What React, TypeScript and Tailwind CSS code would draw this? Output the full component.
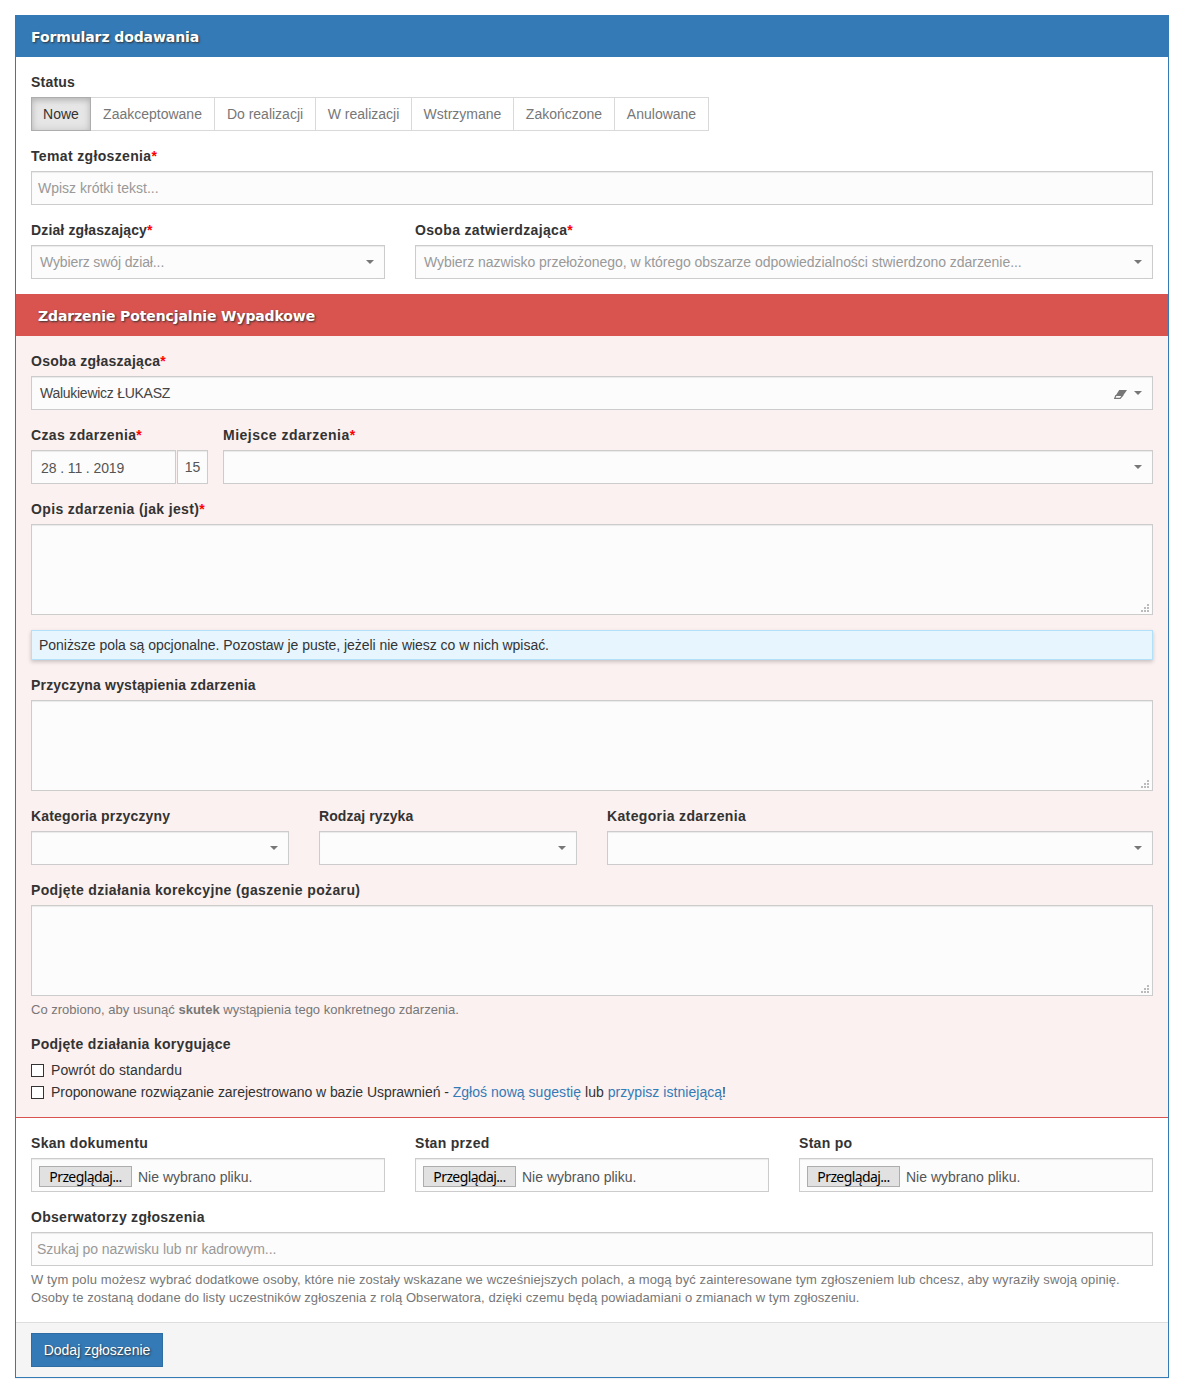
import type { ReactNode } from 'react';

const BOX = 'h-[34px] border border-[#ccc] bg-[#fcfcfc] shadow-[inset_0_1px_1px_rgba(0,0,0,0.075)]';

function Label({ children, required, tracking = 'tracking-[0.3px]' }: { children: ReactNode; required?: boolean; tracking?: string }) {
  return (
    <div className={`${tracking} mb-[5px] h-5 whitespace-nowrap font-bold leading-5`}>
      {children}
      {required && <span className="text-[#f00]">*</span>}
    </div>
  );
}

function Field({ label, required, tracking, className = '', children }: { label: string; required?: boolean; tracking?: string; className?: string; children: ReactNode }) {
  return (
    <div className={className}>
      <Label required={required} tracking={tracking}>{label}</Label>
      {children}
    </div>
  );
}

function Caret() {
  return (
    <svg className="h-1 w-2 shrink-0" viewBox="0 0 8 4" fill="#777">
      <path d="M0 0h8L4 4z" />
    </svg>
  );
}

function Eraser() {
  return (
    <svg className="mt-[2px] mr-[7px] h-[9px] w-[13px] shrink-0" viewBox="0 0 13 9">
      <path d="M5.2 0H13L8.8 6H1.4z" fill="#777" />
      <path d="M2 5.2 0.7 8.4H6.1L9 5" fill="none" stroke="#777" strokeWidth="1.2" />
    </svg>
  );
}

function Select({ placeholder, value, clearable, tracking = '' }: { placeholder?: string; value?: string; clearable?: boolean; tracking?: string }) {
  return (
    <div className={`${BOX} flex items-center justify-between pr-[10px] pl-2`}>
      <span className={`${tracking} whitespace-nowrap ${value ? 'text-[#444]' : 'text-[#999]'}`}>{value ?? placeholder}</span>
      <span className="flex items-center">
        {clearable && <Eraser />}
        <Caret />
      </span>
    </div>
  );
}

function TextArea() {
  return (
    <div className="flex h-[91px] items-end justify-end border border-[#ccc] bg-[#fcfcfc] pr-[3px] pb-[2px] shadow-[inset_0_1px_1px_rgba(0,0,0,0.075)]">
      <svg className="size-2" viewBox="0 0 8 8" fill="#bbb" shapeRendering="crispEdges">
        <path d="M6 0h2v2H6zM3 3h2v2H3zM6 3h2v2H6zM0 6h2v2H0zM3 6h2v2H3zM6 6h2v2H6z" />
      </svg>
    </div>
  );
}

function FileInput() {
  return (
    <div className={`${BOX} flex items-center pt-[3px] pl-[7px]`}>
      <span className="flex h-[21px] w-[93px] items-center justify-center border border-[#adadad] bg-[#e1e1e1] font-['Noto_Sans',sans-serif] text-[14px] leading-5 tracking-[-0.6px] text-black">
        Przeglądaj...
      </span>
      <span className="ml-[6px] text-[#555]">Nie wybrano pliku.</span>
    </div>
  );
}

function Check({ children }: { children: ReactNode }) {
  return (
    <div className="flex h-[22px] items-center">
      <span className="mr-[7px] size-[13px] border border-[#333] bg-white" />
      <span className="whitespace-nowrap">{children}</span>
    </div>
  );
}

const STATUSES = [
  { name: 'Zaakceptowane', width: 'w-[124px]' },
  { name: 'Do realizacji', width: 'w-[101px]' },
  { name: 'W realizacji', width: 'w-[96px]' },
  { name: 'Wstrzymane', width: 'w-[102px]' },
  { name: 'Zakończone', width: 'w-[101px]' },
  { name: 'Anulowane', width: 'w-[94px]' },
];

export default function App() {
  return (
    <div className="h-[1398px] bg-white p-[15px] font-['Liberation_Sans',Arial,sans-serif] text-[14px] leading-5 text-[#333]">
      <div className="h-[1363px] w-[1154px] border border-[#337ab7] shadow-[0_1px_1px_rgba(0,0,0,0.05)]">
        <h1 className="h-[41px] bg-[#337ab7] pt-[11px] pl-[15px] font-['DejaVu_Sans',Verdana,sans-serif] text-[14px] font-bold leading-5 tracking-[-0.1px] text-white [text-shadow:1px_1px_2px_#333]">
          Formularz dodawania
        </h1>

        <section className="flex h-[237px] flex-col gap-[15px] p-[15px]">
          <Field label="Status" tracking="tracking-[0.2px]">
            <div className="flex">
              <span className="flex h-[34px] w-[60px] items-center justify-center border border-[#adadad] bg-[#e6e6e6] shadow-[inset_0_3px_5px_rgba(0,0,0,0.125),inset_0_0_8px_rgba(0,0,0,0.12)]">
                Nowe
              </span>
              {STATUSES.map((s) => (
                <span key={s.name} className={`${s.width} flex h-[34px] items-center justify-center border-y border-r border-[#d9d9d9] text-[#777]`}>
                  {s.name}
                </span>
              ))}
            </div>
          </Field>
          <Field label="Temat zgłoszenia" required tracking="tracking-[0.35px]">
            <div className={`${BOX} flex items-center pl-[6px] text-[#999]`}>Wpisz krótki tekst...</div>
          </Field>
          <div className="flex gap-[30px]">
            <Field label="Dział zgłaszający" required tracking="tracking-[0.14px]" className="w-[354px]">
              <Select placeholder="Wybierz swój dział..." tracking="tracking-[-0.12px]" />
            </Field>
            <Field label="Osoba zatwierdzająca" required tracking="tracking-[0.34px]" className="w-[738px]">
              <Select placeholder="Wybierz nazwisko przełożonego, w którego obszarze odpowiedzialności stwierdzono zdarzenie..." tracking="tracking-[-0.04px]" />
            </Field>
          </div>
        </section>

        <h2 className="h-[42px] bg-[#d9534f] pt-3 pl-[22px] font-['DejaVu_Sans',Verdana,sans-serif] text-[14px] font-bold leading-5 tracking-[-0.12px] text-white [text-shadow:1px_1px_2px_#333]">
          Zdarzenie Potencjalnie Wypadkowe
        </h2>

        <section className="flex h-[782px] flex-col gap-[15px] border-b border-[#d9534f] bg-[#fbf1f0] px-[15px] pt-[15px]">
          <Field label="Osoba zgłaszająca" required tracking="tracking-[0.28px]">
            <Select value="Walukiewicz ŁUKASZ" clearable tracking="tracking-[-0.27px]" />
          </Field>
          <div className="flex gap-[15px]">
            <Field label="Czas zdarzenia" required tracking="tracking-[0.35px]" className="w-[177px]">
              <div className="flex gap-px text-[#555]">
                <div className={`${BOX} flex w-[145px] items-center pt-[2px] pl-[9px] tracking-[-0.1px]`}>28 . 11 . 2019</div>
                <div className={`${BOX} flex w-[31px] items-center justify-center`}>15</div>
              </div>
            </Field>
            <Field label="Miejsce zdarzenia" required tracking="tracking-[0.5px]" className="w-[930px]">
              <Select />
            </Field>
          </div>
          <Field label="Opis zdarzenia (jak jest)" required tracking="tracking-[0.35px]">
            <TextArea />
          </Field>
          <div className="flex h-[30px] shrink-0 items-center border border-[#b3e0f9] bg-[#e7f5fe] pl-[7px] tracking-[-0.035px] shadow-[0_2px_4px_rgba(0,0,0,0.2)]">
            Poniższe pola są opcjonalne. Pozostaw je puste, jeżeli nie wiesz co w nich wpisać.
          </div>
          <Field label="Przyczyna wystąpienia zdarzenia" tracking="tracking-[0.17px]">
            <TextArea />
          </Field>
          <div className="flex gap-[30px]">
            <Field label="Kategoria przyczyny" tracking="tracking-[0.16px]" className="w-[258px]">
              <Select />
            </Field>
            <Field label="Rodzaj ryzyka" tracking="tracking-[0.07px]" className="w-[258px]">
              <Select />
            </Field>
            <Field label="Kategoria zdarzenia" tracking="tracking-[0.36px]" className="w-[546px]">
              <Select />
            </Field>
          </div>
          <Field label="Podjęte działania korekcyjne (gaszenie pożaru)" tracking="tracking-[0.36px]">
            <TextArea />
            <p className="mt-[5px] h-[18px] text-[13px] leading-[18px] text-[#777]">
              Co zrobiono, aby usunąć <b>skutek</b> wystąpienia tego konkretnego zdarzenia.
            </p>
          </Field>
          <div>
            <Label tracking="tracking-[0.3px]">Podjęte działania korygujące</Label>
            <Check><span className="tracking-[0.1px]">Powrót do standardu</span></Check>
            <Check>
              <span className="tracking-[-0.05px]">Proponowane rozwiązanie zarejestrowano w bazie Usprawnień - </span>
              <span className="tracking-[0.04px]">
                <a className="text-[#337ab7]">Zgłoś nową sugestię</a> lub{' '}
                <a className="text-[#337ab7]">przypisz istniejącą</a>!
              </span>
            </Check>
          </div>
        </section>

        <section className="flex h-[204px] flex-col gap-[15px] px-[15px] pt-[15px]">
          <div className="flex gap-[30px]">
            {['Skan dokumentu', 'Stan przed', 'Stan po'].map((name) => (
              <Field key={name} label={name} className="w-[354px]">
                <FileInput />
              </Field>
            ))}
          </div>
          <Field label="Obserwatorzy zgłoszenia" tracking="tracking-[0.28px]">
            <div className={`${BOX} flex items-center pl-[5px] tracking-[-0.05px] text-[#999]`}>Szukaj po nazwisku lub nr kadrowym...</div>
            <p className="mt-[5px] whitespace-nowrap text-[13px] leading-[18px] text-[#777]">
              <span className="tracking-[0.1px]">
                W tym polu możesz wybrać dodatkowe osoby, które nie zostały wskazane we wcześniejszych polach, a mogą być zainteresowane tym zgłoszeniem lub chcesz, aby wyraziły swoją opinię.
              </span>
              <br />
              <span className="tracking-[0.067px]">
                Osoby te zostaną dodane do listy uczestników zgłoszenia z rolą Obserwatora, dzięki czemu będą powiadamiani o zmianach w tym zgłoszeniu.
              </span>
            </p>
          </Field>
        </section>

        <footer className="h-[55px] border-t border-[#ddd] bg-[#f5f5f5] pt-[10px] pl-[15px]">
          <button className="h-[34px] w-[132px] whitespace-nowrap border border-[#2e6da4] bg-[#337ab7] text-white [text-shadow:1px_1px_2px_#333]">
            Dodaj zgłoszenie
          </button>
        </footer>
      </div>
    </div>
  );
}
